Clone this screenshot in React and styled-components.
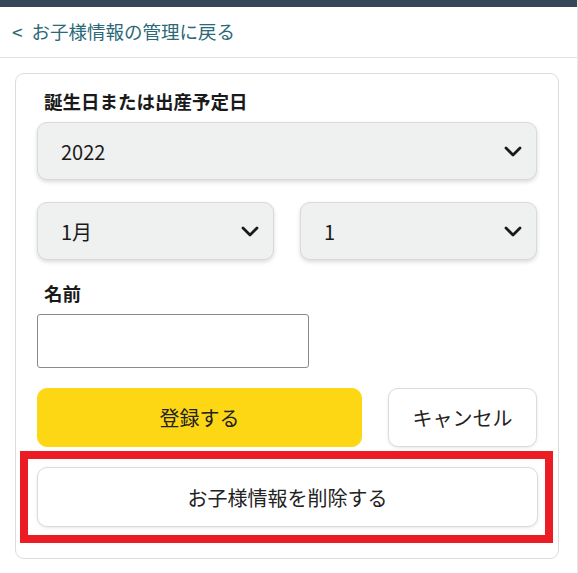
import React from 'react'
import styled, { createGlobalStyle } from 'styled-components'

const GlobalStyle = createGlobalStyle`
  html, body {
    margin: 0;
    padding: 0;
    background: #fff;
  }
  body {
    font-family: "Noto Sans CJK JP", "Noto Sans", sans-serif;
    color: #222;
  }
`

function Chevron() {
  return (
    <svg width="18" height="11" viewBox="0 0 18 11" fill="none">
      <polyline points="2,2 9,9 16,2" stroke="#1a1a1a" strokeWidth="2.8" strokeLinecap="round" strokeLinejoin="round" />
    </svg>
  )
}

function App() {
  return (
    <>
      <GlobalStyle />
      <Page>
        <TopBar />
        <BackRow>
          <BackLink>
            <Arrow>&lt;</Arrow>お子様情報の管理に戻る
          </BackLink>
        </BackRow>
        <Content>
          <Card>
            <Label>誕生日または出産予定日</Label>
            <Select>
              <span>2022</span>
              <Chevron />
            </Select>
            <SelectRow>
              <Select>
                <span>1月</span>
                <Chevron />
              </Select>
              <Select>
                <span>1</span>
                <Chevron />
              </Select>
            </SelectRow>
            <Label $top={22}>名前</Label>
            <NameInput type="text" />
            <ButtonRow>
              <Button $primary>登録する</Button>
              <Button $narrow>キャンセル</Button>
            </ButtonRow>
            <Highlight>
              <Button $full>お子様情報を削除する</Button>
            </Highlight>
          </Card>
        </Content>
      </Page>
    </>
  )
}

const Page = styled.div`
  width: 577px;
  min-height: 573px;
  border-right: 1px solid #e6e6e6;
`

const TopBar = styled.div`
  height: 7px;
  background: #37475a;
`

const BackRow = styled.div`
  height: 50px;
  display: flex;
  align-items: center;
  padding-left: 12px;
  border-bottom: 1px solid #e3e3e3;
`

const BackLink = styled.a`
  display: flex;
  align-items: center;
  font-size: 18.5px;
  color: #2b6878;
  text-decoration: none;
  line-height: 1;
  margin-top: -2px;
`

const Arrow = styled.span`
  font-size: 19px;
  margin-right: 9px;
`

const Content = styled.div`
  padding: 15px 18px 15px 15px;
`

const Card = styled.div`
  border: 1px solid #dcdcdc;
  border-radius: 9px;
  padding: 16px 21px 15px 21px;
  display: flex;
  flex-direction: column;
`

const Label = styled.div`
  font-size: 18.5px;
  font-weight: 700;
  line-height: 22px;
  color: #1a1a1a;
  padding-left: 7px;
  margin-top: ${p => (p.$top || 0)}px;
  margin-bottom: 10px;
`

const Select = styled.div`
  flex: none;
  height: 58px;
  box-sizing: border-box;
  display: flex;
  align-items: center;
  justify-content: space-between;
  padding: 0 14px 0 23px;
  background: #eff0f0;
  border: 1px solid #d9d9d9;
  border-radius: 10px;
  box-shadow: 0 2px 4px rgba(0, 0, 0, 0.15);
  font-size: 20px;
  color: #1a1a1a;
`

const SelectRow = styled.div`
  display: grid;
  grid-template-columns: 1fr 1fr;
  gap: 26px;
  margin-top: 22px;
`

const NameInput = styled.input`
  width: 272px;
  height: 54px;
  box-sizing: border-box;
  border: 1px solid #8a8a8a;
  border-radius: 3px;
  background: #fff;
`

const ButtonRow = styled.div`
  display: flex;
  gap: 26px;
  margin-top: 20px;
`

const Button = styled.button`
  height: ${p => (p.$full ? 60 : 59)}px;
  box-sizing: border-box;
  font-family: inherit;
  font-size: 20px;
  color: #222;
  border-radius: 10px;
  border: 1px solid ${p => (p.$primary ? '#fdd714' : '#dcdcdc')};
  background: ${p => (p.$primary ? '#fdd714' : '#fff')};
  box-shadow: ${p => (p.$primary ? 'none' : '0 1px 3px rgba(0,0,0,0.1)')};
  flex: ${p => (p.$primary || p.$full ? 1 : 'none')};
  width: ${p => (p.$narrow ? '149px' : 'auto')};
  cursor: pointer;
`

const Highlight = styled.div`
  display: flex;
  margin: 4px -16px 0 -17px;
  padding: 8px 7px 8px 9px;
  border: 8px solid #ec1c24;
`

export default App
